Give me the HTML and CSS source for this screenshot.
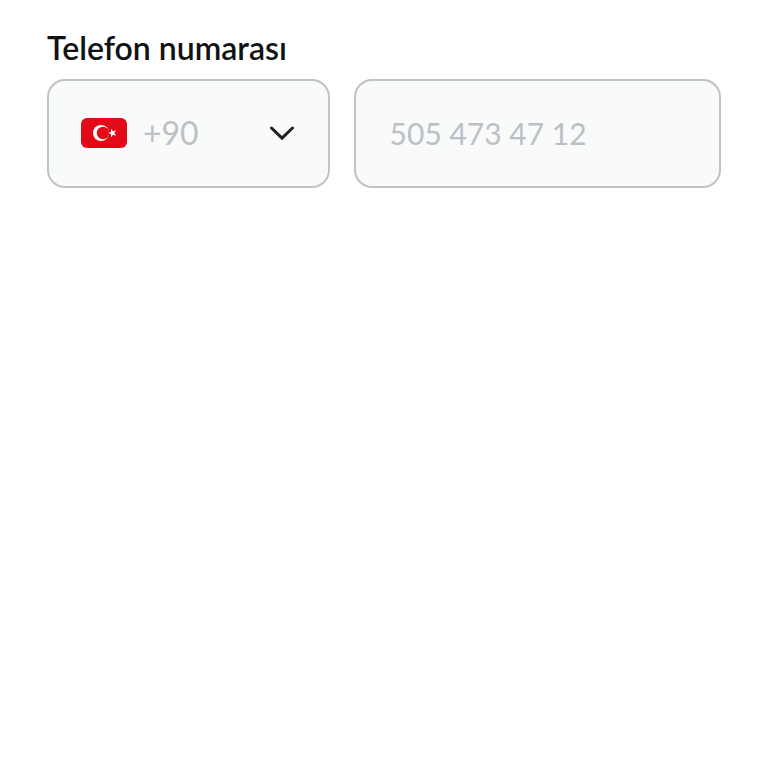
FILE: index.html
```html
<!DOCTYPE html>
<html lang="tr">
<head>
<meta charset="utf-8">
<meta name="viewport" content="width=device-width, initial-scale=1">
<title>Telefon numarası</title>
<link rel="stylesheet" href="styles.css">
</head>
<body>
<form class="phone-form">
	<label class="phone-label" for="phone">Telefon numarası</label>
	<div class="phone-row">
		<div class="country">
			<svg class="flag" viewBox="0 0 46 30" aria-hidden="true">
				<rect width="46" height="30" rx="6" fill="#e30a17"/>
				<circle cx="20" cy="15" r="8" fill="#fff"/>
				<circle cx="22" cy="15" r="6.2" fill="#e30a17"/>
				<path fill="#fff" d="M27 15l3-1.100 0-3.200 2 2.500 3.200-1-1.900 2.800 1.900 2.800-3.200-1-2 2.500 0-3.200z"/>
			</svg>
			<select class="field code" aria-label="Ülke kodu">
				<option>+90</option>
			</select>
			<svg class="arrow" viewBox="0 0 24 14" aria-hidden="true">
				<path d="M1.500 2L12 12.200 22.500 2" fill="none" stroke="#202226" stroke-width="3" stroke-linecap="round"/>
			</svg>
		</div>
		<input class="field number" id="phone" type="tel" placeholder="505 473 47 12">
	</div>
</form>
</body>
</html>
```

FILE: styles.css
```css
body{margin:0;background:#fff;font-family:Lato,"Open Sans",sans-serif;}
.phone-form{padding:28px 47px;}
.phone-label{display:block;margin-bottom:11px;font-size:32px;font-weight:600;line-height:40px;color:#111214;}
.phone-row{display:grid;grid-template-columns:10fr 13fr;gap:24px;}
.country{position:relative;}
.field{display:block;box-sizing:border-box;width:100%;min-width:0;height:109px;margin:0;padding:0 34px;border:2px solid #c0c2ca;border-radius:18px;background:#f9fbfb;font:400 30px/40px Lato,"Open Sans",sans-serif;color:#bcc0c6;outline:none;}
.code{padding:0 60px 2px 94px;font-size:32px;appearance:none;-webkit-appearance:none;}
.number{padding-bottom:2px;}
.number::placeholder{color:#bcc0c6;opacity:1;}
.flag,.arrow{position:absolute;top:0;bottom:2px;margin:auto 0;pointer-events:none;}
.flag{left:34px;width:46px;height:30px;}
.arrow{right:36px;width:24px;height:14px;}
```
